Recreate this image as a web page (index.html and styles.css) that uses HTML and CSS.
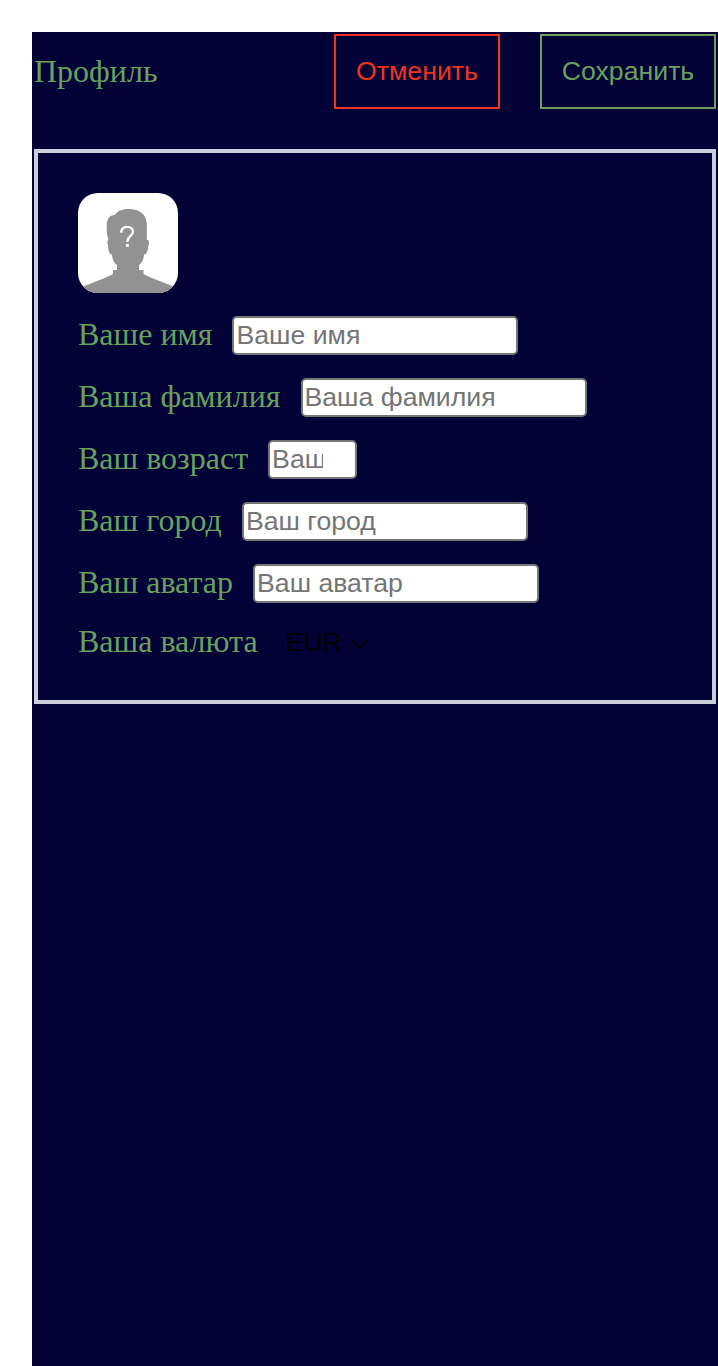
FILE: index.html
```html
<!DOCTYPE html>
<html lang="ru">
<head>
<meta charset="utf-8">
<title>Профиль</title>
<link rel="stylesheet" href="styles.css">
</head>
<body>
<main class="page">
  <header class="header">
    <span class="title">Профиль</span>
    <div class="actions">
      <button class="btn btn-cancel" type="button">Отменить</button>
      <button class="btn btn-save" type="button">Сохранить</button>
    </div>
  </header>
  <form class="card">
    <svg class="avatar" viewBox="0 0 100 100" aria-hidden="true">
      <rect width="100" height="100" fill="#fff"/>
      <path fill="#929292" d="M36.500 22C40 17.500 45 16 50.500 16C62 16 68.500 21.500 68.800 31V46.500C71.500 47 71.200 50 70.500 52.500C70 57 69 61.500 66 61.500C65.500 67 64 70 61 72V77H65.500V81C74 86 85 88.500 95 93.500V100H5V93.500C15 89.500 28 85 35 81V77H39V72C36 70 34.500 67 34 61.500C31 61.500 30.500 58 30 52.500C29 50 29 47.500 30.500 47C29 43 28.500 37 28.700 32C29 26 31.500 22 36.500 22Z"/>
      <path d="M43.200 39.700C43.400 35.800 45.600 33.900 49.200 33.900C52.600 33.900 54.900 35.800 54.900 38.800C54.900 43.200 49.300 43.400 49.300 48.800" fill="none" stroke="#fff" stroke-width="2.400"/>
      <rect x="47.900" y="51" width="2.900" height="2.900" fill="#fff"/>
    </svg>
    <div class="fields">
      <label class="field"><span>Ваше имя</span><input class="input" type="text" placeholder="Ваше имя"></label>
      <label class="field"><span>Ваша фамилия</span><input class="input" type="text" placeholder="Ваша фамилия"></label>
      <label class="field"><span>Ваш возраст</span><input class="input input-age" type="text" placeholder="Ваш возраст"></label>
      <label class="field"><span>Ваш город</span><input class="input" type="text" placeholder="Ваш город"></label>
      <label class="field"><span>Ваш аватар</span><input class="input" type="text" placeholder="Ваш аватар"></label>
    </div>
    <div class="field currency">
      <span>Ваша валюта</span>
      <button class="select" type="button">EUR
        <svg class="chevron" viewBox="0 0 18 12" aria-hidden="true"><path d="M1 1.500L9 9.500L17 1.500"/></svg>
      </button>
    </div>
  </form>
</main>
</body>
</html>
```
FILE: styles.css
```css
* { box-sizing: border-box; }
body {
  margin: 0;
  padding: 32px 0 0 32px;
  background: #fff;
  font: 32px/37px "Liberation Serif", "Times New Roman", serif;
  color: #67a15d;
}
.page {
  min-height: 1334px;
  padding: 2px;
  background: #030236;
}
.header {
  display: flex;
  justify-content: space-between;
  align-items: center;
  height: 75px;
}
.actions { display: flex; gap: 40px; }
.btn {
  height: 75px;
  padding: 0;
  border: 2px solid currentColor;
  background: none;
  font: 26.667px/31px "Liberation Sans", Arial, sans-serif;
  white-space: nowrap;
}
.btn-cancel { width: 166px; color: #ef3323; }
.btn-save { width: 176px; color: #67a15d; }
.card {
  height: 555px;
  margin-top: 40px;
  padding: 40px;
  border: 4px solid #cccddb;
}
.avatar {
  display: block;
  width: 100px;
  height: 100px;
  border-radius: 20px;
}
.fields {
  display: flex;
  flex-direction: column;
  gap: 23px;
  margin-top: 23px;
}
.field {
  display: flex;
  align-items: flex-start;
  gap: 20px;
  height: 39px;
  white-space: nowrap;
}
.input {
  width: 286px;
  height: 39px;
  margin: 0;
  padding: 0 2px;
  border: 2px solid #767676;
  border-radius: 5px;
  background: #fff;
  font: 26.667px/31px "Liberation Sans", Arial, sans-serif;
}
.input::placeholder { color: #757575; opacity: 1; }
.input-age { width: 89px; padding-right: 32px; }
.currency { height: 37px; margin-top: 20px; }
.select {
  display: flex;
  align-items: center;
  gap: 9px;
  height: 37px;
  margin: 0;
  padding: 2px 8px 0;
  border: 0;
  background: none;
  color: #000;
  font: 26.667px/31px "Liberation Sans", Arial, sans-serif;
}
.chevron {
  width: 18px;
  height: 12px;
  margin-top: 2px;
  fill: none;
  stroke: #000;
  stroke-width: 2px;
}
```
